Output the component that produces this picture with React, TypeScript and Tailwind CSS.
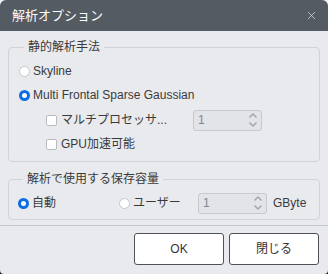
import { X } from "lucide-react";

const font = { fontFamily: '"Liberation Sans", "Noto Sans CJK JP", sans-serif' };

function Radio({ checked }: { checked?: boolean }) {
  return checked ? (
    <span className="w-[11px] h-[11px] rounded-full border-[3px] border-[#0b6fe3] bg-white shrink-0" />
  ) : (
    <span className="w-[11px] h-[11px] rounded-full border border-[#c3c6cb] bg-white shrink-0" />
  );
}

function Check() {
  return <span className="w-[11px] h-[11px] rounded-[2px] border border-[#b8bbc0] bg-white shrink-0" />;
}

function Spinner() {
  return (
    <div className="w-[69px] h-[21px] flex items-center justify-between rounded-[3px] border border-[#c6c9ce] bg-[#e2e4e8] pl-[4px] pr-[3px]">
      <span className="text-[12px] text-[#7d8796]">1</span>
      <svg width="10" height="16" viewBox="0 0 10 16" fill="none" stroke="#9ea3a9" strokeWidth="1.4">
        <path d="M1.5 5.5 L5 2 L8.5 5.5" />
        <path d="M1.5 10.5 L5 14 L8.5 10.5" />
      </svg>
    </div>
  );
}

export default function App() {
  return (
    <div className="w-[328px] h-[274px] bg-[linear-gradient(to_bottom,#f2f3f5_50%,#1d2126_50%)]" style={font}>
      <div className="flex flex-col h-full rounded-t-[6px] rounded-b-[4px] overflow-hidden bg-[#e9eaee] text-[#3a3a3a] text-[12px]">
        <div className="h-[31px] shrink-0 bg-[#555b62] flex items-center justify-between pl-3 pr-[10px] text-white">
          <span className="text-[13px]">解析オプション</span>
          <X className="w-[13px] h-[13px] text-[#e4e6e8]" strokeWidth={1.3} />
        </div>

        <div className="px-2 pt-2">
          <fieldset className="border border-[#cfd2d6] rounded-[4px] px-[10px] pb-[6px]">
            <legend className="px-[4px] ml-[5px] leading-[16px] text-[12px]">静的解析手法</legend>
            <div className="mt-1 h-6 flex items-center gap-[3px]">
              <Radio />
              <span>Skyline</span>
            </div>
            <div className="h-6 flex items-center gap-[3px]">
              <Radio checked />
              <span>Multi Frontal Sparse Gaussian</span>
            </div>
            <div className="h-[26px] flex items-center pl-[27px]">
              <Check />
              <span className="ml-[4px] w-[108px] whitespace-nowrap">マルチプロセッサ...</span>
              <div className="ml-[24px]">
                <Spinner />
              </div>
            </div>
            <div className="h-[22px] flex items-center pl-[27px] gap-[4px]">
              <Check />
              <span>GPU加速可能</span>
            </div>
          </fieldset>

          <fieldset className="mt-[9px] border border-[#cfd2d6] rounded-[4px] px-[9px] pb-[4px]">
            <legend className="px-[4px] ml-[5px] leading-[16px] text-[12px]">解析で使用する保存容量</legend>
            <div className="mt-1 h-6 flex items-center">
              <Radio checked />
              <span className="ml-[3px] w-[87px]">自動</span>
              <Radio />
              <span className="ml-[3px] w-[65px]">ユーザー</span>
              <Spinner />
              <span className="ml-[6px]">GByte</span>
            </div>
          </fieldset>
        </div>

        <div className="mt-[5px] h-px bg-[#c2c8cd]" />

        <div className="flex justify-end gap-[5px] pr-[9px] pt-[7px]">
          <button className="w-[90px] h-[32px] bg-white border border-[#4d5258] rounded-[3px] text-[12px] text-[#333]">OK</button>
          <button className="w-[90px] h-[32px] bg-white border border-[#4d5258] rounded-[3px] text-[12px] text-[#333]">閉じる</button>
        </div>
      </div>
    </div>
  );
}
